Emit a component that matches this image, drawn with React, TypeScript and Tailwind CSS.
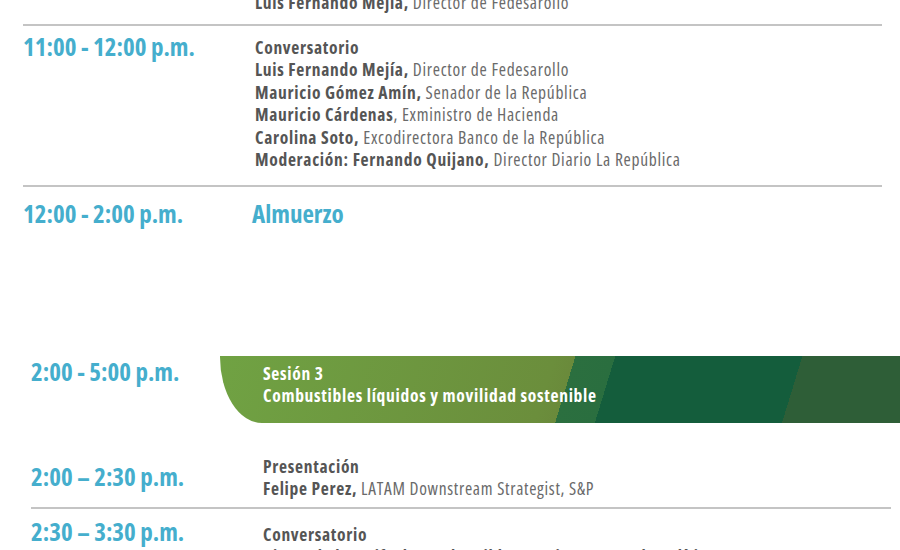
const font = { fontFamily: '"Open Sans", "Liberation Sans", sans-serif' };

type Line = { bold: string; rest?: string };

const conversatorio: Line[] = [
  { bold: 'Luis Fernando Mejía,', rest: ' Director de Fedesarollo' },
  { bold: 'Mauricio Gómez Amín,', rest: ' Senador de la República' },
  { bold: 'Mauricio Cárdenas', rest: ', Exministro de Hacienda' },
  { bold: 'Carolina Soto,', rest: ' Excodirectora Banco de la República' },
  { bold: 'Moderación: Fernando Quijano,', rest: ' Director Diario La República' },
];

function Speaker({ line }: { line: Line }) {
  return (
    <div className="leading-[22.5px] text-[17.5px] tracking-[0.7px] text-[#6a6a6a] whitespace-nowrap">
      <span className="font-bold text-[#555555]">{line.bold}</span>
      {line.rest}
    </div>
  );
}

function Heading({ children, white }: { children: React.ReactNode; white?: boolean }) {
  return (
    <div className={`leading-[22.5px] text-[17.5px] tracking-[0.7px] font-bold whitespace-nowrap ${white ? 'text-white' : 'text-[#555555]'}`}>
      {children}
    </div>
  );
}

function Time({ children }: { children: React.ReactNode }) {
  return <div className="text-[25px] leading-[30px] font-bold text-[#45aecd] whitespace-nowrap">{children}</div>;
}

export default function App() {
  return (
    <div style={font} className="w-[900px] h-[550px] overflow-hidden bg-white font-stretch-[75%]">
      {/* morning block */}
      <div className="-mt-[9px] ml-[23px] mr-[18px]">
        <div className="pl-[232px] pb-[10px]">
          <Speaker line={{ bold: 'Luis Fernando Mejía,', rest: ' Director de Fedesarollo' }} />
        </div>
        <div className="border-t-2 border-[#c4c4c4]" />

        <div className="flex pt-[10px] pb-[14px]">
          <div className="w-[232px] shrink-0 -mt-[5px]">
            <Time>11:00 - 12:00 p.m.</Time>
          </div>
          <div>
            <Heading>Conversatorio</Heading>
            {conversatorio.map((l) => (
              <Speaker key={l.bold} line={l} />
            ))}
          </div>
        </div>
        <div className="border-t-2 border-[#c4c4c4]" />

        <div className="flex pt-[11px]">
          <div className="w-[229px] shrink-0">
            <Time>12:00 - 2:00 p.m.</Time>
          </div>
          <Time>Almuerzo</Time>
        </div>
      </div>

      {/* afternoon block */}
      <div className="mt-[128px] flex">
        <div className="w-[220px] shrink-0 pl-[31px]">
          <Time>2:00 - 5:00 p.m.</Time>
        </div>
        <div className="flex-1 h-[67px] rounded-bl-[42px_66px] pl-[43px] pt-[6px] bg-[linear-gradient(107deg,#70a243_0px,#6b8e3c_320px,#6a8a3b_340px,#2b6f3f_340px,#2a6e3f_378px,#145d3c_378px,#145d3c_557px,#2e5e37_557px)]">
          <Heading white>Sesión 3</Heading>
          <Heading white>Combustibles líquidos y movilidad sostenible</Heading>
        </div>
      </div>

      <div className="ml-[31px] mr-[9px]">
        <div className="flex pt-[32px] pb-[7px]">
          <div className="w-[232px] shrink-0 pt-[6px]">
            <Time>2:00 – 2:30 p.m.</Time>
          </div>
          <div>
            <Heading>Presentación</Heading>
            <Speaker line={{ bold: 'Felipe Perez,', rest: ' LATAM Downstream Strategist, S&P' }} />
          </div>
        </div>
        <div className="border-t-2 border-[#c4c4c4]" />

        <div className="flex pt-[7px]">
          <div className="w-[232px] shrink-0">
            <Time>2:30 – 3:30 p.m.</Time>
          </div>
          <div className="pt-[7px]">
            <Heading>Conversatorio</Heading>
            <Heading>Ajuste de la tarifa de combustibles y su impacto en la política</Heading>
          </div>
        </div>
      </div>
    </div>
  );
}
